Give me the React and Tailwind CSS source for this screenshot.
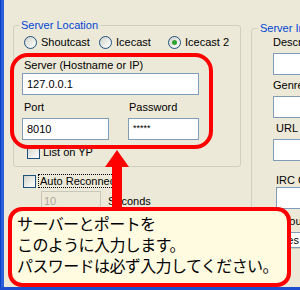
import React from "react";

function Radio({ checked, label, className = "" }) {
  return (
    <div className={"flex items-center " + className}>
      <span className="w-[13px] h-[13px] shrink-0 rounded-full border border-[#1C5180] bg-linear-to-br from-[#D4D4CC] to-white flex items-center justify-center">
        {checked && <span className="w-[5px] h-[5px] rounded-full bg-[#2FA32F]" />}
      </span>
      <span className="ml-[4px] leading-[13px]">{label}</span>
    </div>
  );
}

function Check() {
  return <span className="w-[13px] h-[13px] shrink-0 border border-[#1C5180] bg-linear-to-br from-[#D4D4CC] to-white" />;
}

function Box({ children, className = "" }) {
  return (
    <div className={"h-[22px] border border-[#7F9DB9] bg-white pl-[4px] flex items-center " + className}>
      {children}
    </div>
  );
}

export default function App() {
  return (
    <div className="relative w-[300px] h-[290px] overflow-hidden bg-[#ECE9D8] flex flex-col font-['Liberation_Sans',Arial,sans-serif] text-[11px] text-black">
      <div className="flex flex-1 min-h-0">
        <div className="w-[4px] shrink-0 bg-[#2B5FD9] border-l border-[#0B3FC8]" />
        <div className="flex flex-1 min-w-0">
          {/* Left column */}
          <div className="w-[228px] ml-[9px] mt-[18px] shrink-0 flex flex-col">
            <fieldset className="border border-[#D0D0BF] rounded-[3px] pl-[8px] pb-[7px]">
              <legend className="-ml-[3px] px-[2px] leading-[14px] text-[#0046D5]">Server Location</legend>
              <div className="flex mt-[4px] ml-[2px]">
                <Radio label="Shoutcast" className="w-[75px]" />
                <Radio label="Icecast" className="w-[69px]" />
                <Radio label="Icecast 2" checked />
              </div>
              <div className="mt-[9px] ml-[2px] leading-[14px]">Server (Hostname or IP)</div>
              <Box className="mt-[1px] w-[177px]">127.0.0.1</Box>
              <div className="flex gap-[19px] mt-[5px]">
                <div className="flex flex-col w-[87px]">
                  <div className="ml-[2px] leading-[14px]">Port</div>
                  <Box className="mt-[4px]">8010</Box>
                </div>
                <div className="flex flex-col w-[71px]">
                  <div className="ml-[1px] leading-[14px]">Password</div>
                  <Box className="mt-[4px] text-[9px]">*****</Box>
                </div>
              </div>
              <div className="flex items-center mt-[6px] ml-[5px]">
                <Check />
                <span className="ml-[3px] leading-[13px]">List on YP</span>
              </div>
            </fieldset>
            <div className="flex items-center mt-[7px] ml-[10px]">
              <Check />
              <span className="ml-[2px] px-[1px] border border-dotted border-black leading-[12px]">Auto Reconnect</span>
            </div>
            <div className="flex items-center mt-[3px] ml-[28px]">
              <div className="w-[60px] h-[21px] border border-[#C9C7BA] text-[#ACA899] pl-[2px] flex items-center">10</div>
              <span className="ml-[7px]">Seconds</span>
            </div>
          </div>
          {/* Right column */}
          <div className="ml-[10px] mt-[21px] shrink-0">
            <fieldset className="w-[200px] border border-[#D0D0BF] rounded-[3px] pl-[21px]">
              <legend className="-ml-[15px] px-[2px] leading-[14px] text-[#0046D5]">Server Info</legend>
              <div className="leading-[14px]">Description</div>
              <Box className="mt-[4px] w-[150px]" />
              <div className="mt-[3px] leading-[14px]">Genre</div>
              <Box className="mt-[4px] w-[150px]" />
              <div className="mt-[3px] ml-[3px] leading-[14px]">URL</div>
              <Box className="mt-[4px] w-[150px]" />
              <div className="mt-[12px] ml-[3px] leading-[14px]">IRC Channel</div>
              <Box className="ml-[3px] w-[150px]" />
              <div className="mt-[5px] ml-[10px] leading-[14px]">You</div>
              <div className="mt-[4px] ml-[3px] w-[150px] h-[16px] border border-[#7F9DB9] bg-white pl-[4px] flex items-center">Yes</div>
            </fieldset>
          </div>
        </div>
      </div>
      <div className="h-[3px] shrink-0 bg-[#1D4ED0]" />

      {/* Highlight rectangle */}
      <div className="absolute left-[10px] top-[53px] w-[203px] h-[96px] border-[4px] border-[#FF0000] rounded-[18px]" />

      {/* Arrow */}
      <svg className="absolute left-[104px] top-[149px]" width="26" height="62" viewBox="0 0 26 62">
        <polygon points="13,1 1,18 8,18 8,62 18,62 18,18 25,18" fill="#FF0000" />
      </svg>

      {/* Callout */}
      <div className="absolute left-[8px] top-[207px] w-[283px] h-[80px] border-[4px] border-[#FF0000] rounded-[14px] bg-[#FFFBE1] pl-[5px] pt-[2px] font-['Noto_Sans_CJK_JP',sans-serif] text-[16px] tracking-[-0.6px] leading-[21px] text-black">
        <div>サーバーとポートを</div>
        <div>このように入力します。</div>
        <div>パスワードは必ず入力してください。</div>
      </div>
    </div>
  );
}
